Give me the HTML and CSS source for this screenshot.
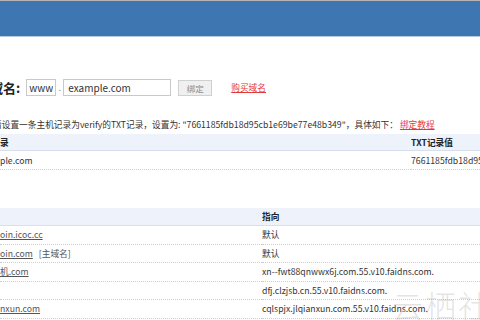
FILE: index.html
```html
<!doctype html>
<html lang="en">
  <head>
    <meta charset="UTF-8" />
    <meta name="viewport" content="width=device-width, initial-scale=1.0" />
    <title>绑定域名</title>
    <link rel="stylesheet" href="styles.css">
  </head>
  <body>
    <div class="topbar"></div>

    <div class="content">
      <div class="bind-row">
        <span class="bind-label">域名:</span>
        <input class="sub" type="text" value="www" />
        <span class="dot">.</span>
        <input class="domain" type="text" value="example.com" />
        <button class="bind-btn">绑定</button>
        <a class="red-link buy" href="#">购买域名</a>
      </div>

      <p class="tip">请设置一条主机记录为verify的TXT记录，设置为: "7661185fdb18d95cb1e69be77e48b349"，具体如下： <a class="red-link" href="#">绑定教程</a></p>

      <table class="rec txt-rec">
        <thead>
          <tr><th class="col1">录</th><th>TXT记录值</th></tr>
        </thead>
        <tbody>
          <tr><td>ple.com</td><td>7661185fdb18d95cb1e69be77e48b349</td></tr>
        </tbody>
      </table>

      <table class="rec domain-list">
        <thead>
          <tr><th class="col1"></th><th>指向</th></tr>
        </thead>
        <tbody>
          <tr><td><a href="#">oin.icoc.cc</a></td><td>默认</td></tr>
          <tr><td><a href="#">oin.com</a><span class="main-tag">[主域名]</span></td><td>默认</td></tr>
          <tr><td><a href="#">机.com</a></td><td>xn--fwt88qnwwx6j.com.55.v10.faidns.com.</td></tr>
          <tr><td></td><td>dfj.clzjsb.cn.55.v10.faidns.com.</td></tr>
          <tr><td><a href="#">nxun.com</a></td><td>cqlspjx.jlqianxun.com.55.v10.faidns.com.</td></tr>
        </tbody>
      </table>
    </div>

    <div class="watermark">云栖社区</div>
  </body>
</html>
```

FILE: styles.css
```css
html {
  overflow: hidden;
}

body {
  margin: 0;
  font-family: "Noto Sans CJK SC", sans-serif;
  font-size: 8.7px;
  color: #333;
  position: relative;
  height: 320px;
}

.topbar {
  height: 35px;
  background-color: #3d76b0;
  border-top: 1px solid #b4b4b4;
  border-bottom: 1px solid #b5cbe0;
}

.bind-row {
  display: flex;
  align-items: center;
  height: 17px;
  margin-top: 42px;
}

.bind-label {
  margin-left: -10px;
  margin-right: 6px;
  font-size: 13px;
  font-weight: bold;
  color: #222;
}

.bind-row input {
  box-sizing: border-box;
  height: 17px;
  border: 1px solid #c9c9c9;
  padding: 0 4px;
  font-family: inherit;
  font-size: 10px;
  color: #333;
  outline: none;
}

.sub {
  width: 30px;
}

.bind-row .sub {
  padding: 0 2px;
  text-align: center;
}

.dot {
  width: 7px;
  text-align: center;
  color: #888;
}

.domain {
  width: 108px;
}

.bind-btn {
  box-sizing: border-box;
  width: 34px;
  height: 16px;
  margin-left: 7px;
  padding: 0;
  border: 1px solid #d0d0d0;
  background-color: #f0f0f0;
  font-family: inherit;
  font-size: 8.5px;
  color: #888;
}

.red-link {
  color: #e23a3a;
  text-decoration: underline;
}

.buy {
  margin-left: 19px;
}

.tip {
  margin: 22px 0 2px -7px;
  line-height: 14px;
  white-space: nowrap;
}

.rec {
  border-collapse: collapse;
  table-layout: fixed;
  width: 720px;
}

.rec th,
.rec td {
  padding: 0;
  text-align: left;
  white-space: nowrap;
  overflow: hidden;
}

.rec th {
  height: 16px;
  background-color: #edf2fb;
  border-bottom: 1px solid #d5dfee;
  font-weight: bold;
  color: #222;
}

.rec td {
  height: 18px;
  border-bottom: 1px dotted #c7d0da;
}

.txt-rec .col1 {
  width: 411px;
}

.domain-list {
  margin-top: 38px;
}

.domain-list th {
  height: 17px;
}

.domain-list td {
  height: 17.5px;
}

.domain-list .col1 {
  width: 262px;
}

.domain-list a {
  color: #555;
  text-decoration: underline;
}

.main-tag {
  margin-left: 6px;
  color: #555;
}

.watermark {
  position: absolute;
  left: 392px;
  top: 282px;
  font-size: 31px;
  font-weight: 300;
  letter-spacing: 2px;
  white-space: nowrap;
  color: rgba(160, 160, 160, 0.3);
}
```
